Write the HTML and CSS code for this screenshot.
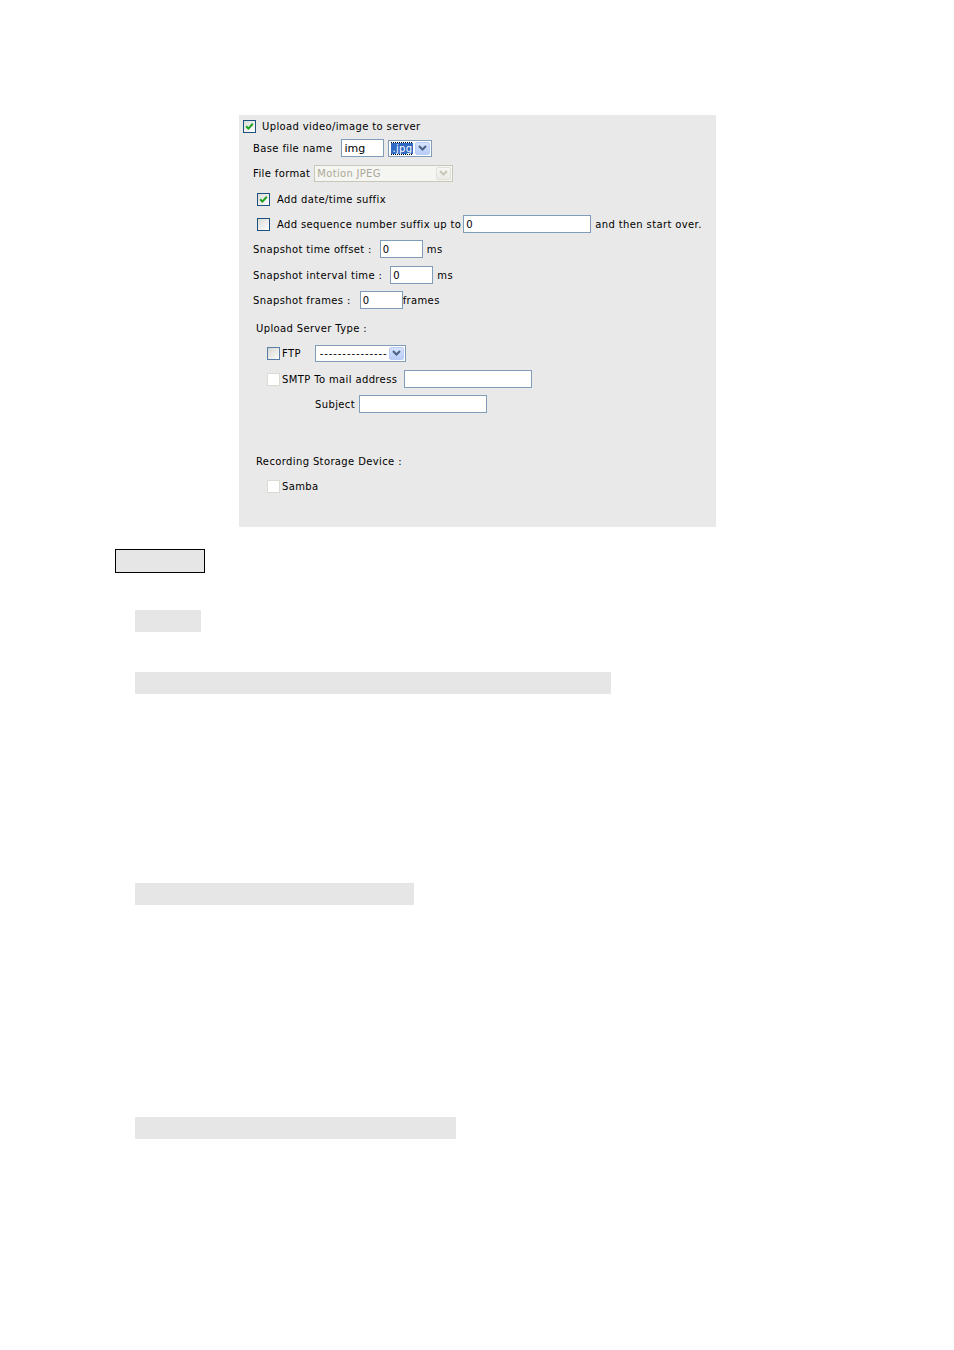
FILE: index.html
```html
<!DOCTYPE html>
<html>
<head>
<meta charset="utf-8">
<link rel="stylesheet" href="styles.css">
</head>
<body>
<div class="page">
  <div class="panel">
    <div class="row r1 ind-a">
      <span class="cb on"><svg viewBox="0 0 11 11" width="11" height="11"><path d="M2.2 5.2 L4.4 7.6 L8.8 2.8" fill="none" stroke="#21a121" stroke-width="2"/></svg></span>
      <span class="lbl gap6">Upload video/image to server</span>
    </div>
    <div class="row r2 ind-b">
      <span class="lbl">Base file name</span>
      <span class="inp w42 ml9">img</span>
      <span class="sel w44 ml4"><span class="sel-val"><span class="hl">.jpg</span></span><span class="btn"><svg viewBox="0 0 9 6" width="9" height="6"><path d="M1 1 L4.5 4.5 L8 1" fill="none" stroke="#4d6185" stroke-width="2"/></svg></span></span>
    </div>
    <div class="row r3 ind-b">
      <span class="lbl">File format</span>
      <span class="sel dis w139 ml4"><span class="sel-val">Motion JPEG</span><span class="btn"><svg viewBox="0 0 9 6" width="9" height="6"><path d="M1 1 L4.5 4.5 L8 1" fill="none" stroke="#c9c7ba" stroke-width="2"/></svg></span></span>
    </div>
    <div class="row r4 ind-c">
      <span class="cb on"><svg viewBox="0 0 11 11" width="11" height="11"><path d="M2.2 5.2 L4.4 7.6 L8.8 2.8" fill="none" stroke="#21a121" stroke-width="2"/></svg></span>
      <span class="lbl gap7">Add date/time suffix</span>
    </div>
    <div class="row r5 ind-c">
      <span class="cb"></span>
      <span class="lbl gap7">Add sequence number suffix up to</span>
      <span class="inp w128 ml2">0</span>
      <span class="lbl ml4">and then start over.</span>
    </div>
    <div class="row r6 ind-b">
      <span class="lbl">Snapshot time offset :</span>
      <span class="inp w43 ml8">0</span>
      <span class="lbl ml4">ms</span>
    </div>
    <div class="row r7 ind-b">
      <span class="lbl">Snapshot interval time :</span>
      <span class="inp w43 ml8">0</span>
      <span class="lbl ml4">ms</span>
    </div>
    <div class="row r8 ind-b">
      <span class="lbl">Snapshot frames :</span>
      <span class="inp w43 ml9">0</span>
      <span class="lbl">frames</span>
    </div>
    <div class="row r9 ind-d">
      <span class="lbl">Upload Server Type :</span>
    </div>
    <div class="row r10 ind-e">
      <span class="cb plain"></span>
      <span class="lbl gap2">FTP</span>
      <span class="sel w91 ml14"><span class="sel-val dash">---------------</span><span class="btn"><svg viewBox="0 0 9 6" width="9" height="6"><path d="M1 1 L4.5 4.5 L8 1" fill="none" stroke="#4d6185" stroke-width="2"/></svg></span></span>
    </div>
    <div class="row r11 ind-e">
      <span class="cb off"></span>
      <span class="lbl gap2">SMTP To mail address</span>
      <span class="inp w128 ml7"></span>
    </div>
    <div class="row r12 ind-f">
      <span class="lbl">Subject</span>
      <span class="inp w128 ml4"></span>
    </div>
    <div class="row r13 ind-d">
      <span class="lbl">Recording Storage Device :</span>
    </div>
    <div class="row r14 ind-e">
      <span class="cb off"></span>
      <span class="lbl gap2">Samba</span>
    </div>
  </div>

  <div class="box"></div>
  <div class="bar b1"></div>
  <div class="bar b2"></div>
  <div class="bar b3"></div>
  <div class="bar b4"></div>
</div>
</body>
</html>
```

FILE: styles.css
```css
html, body {
  margin: 0;
  padding: 0;
  background: #ffffff;
}
.page {
  padding-top: 115px;
  padding-bottom: 40px;
  font-family: "DejaVu Sans", Verdana, sans-serif;
  font-size: 10px;
  color: #000;
}
.panel {
  margin-left: 239px;
  width: 477px;
  height: 412px;
  box-sizing: border-box;
  background: #e9e9e9;
  padding-top: 1px;
  display: flex;
  flex-direction: column;
}
.row {
  height: 20px;
  display: flex;
  align-items: center;
  white-space: nowrap;
}
.r1 { margin-top: 0; }
.r2 { margin-top: 2px; }
.r3 { margin-top: 5px; }
.r4 { margin-top: 6px; }
.r5 { margin-top: 5px; }
.r6 { margin-top: 5px; }
.r7 { margin-top: 6px; }
.r8 { margin-top: 5px; }
.r9 { margin-top: 8px; }
.r10 { margin-top: 5px; }
.r11 { margin-top: 6px; }
.r12 { margin-top: 5px; }
.r13 { margin-top: 37px; }
.r14 { margin-top: 5px; }

.ind-a { padding-left: 4px; }
.ind-b { padding-left: 14px; }
.ind-c { padding-left: 18px; }
.ind-d { padding-left: 17px; }
.ind-e { padding-left: 28px; }
.ind-f { padding-left: 76px; }

.lbl {
  line-height: 14px;
  padding-top: 2px;
  letter-spacing: 0.37px;
}
.gap6 { margin-left: 6px; }
.gap7 { margin-left: 7px; }
.gap2 { margin-left: 2px; }
.ml2 { margin-left: 2px; }
.ml3 { margin-left: 3px; }
.ml4 { margin-left: 4px; }
.ml5 { margin-left: 5px; }
.ml7 { margin-left: 7px; }
.ml8 { margin-left: 8px; }
.ml9 { margin-left: 9px; }
.ml14 { margin-left: 14px; }

.cb {
  width: 13px;
  height: 13px;
  box-sizing: border-box;
  border: 1px solid #1c5180;
  background: linear-gradient(135deg, #dcdcd7 0%, #f4f4f2 70%, #ffffff 100%);
  display: flex;
  align-items: center;
  justify-content: center;
  flex: none;
}
.cb.plain {
  border-color: #587ea8;
  background: linear-gradient(135deg, #d7d7d2 0%, #f0f0ee 70%, #ffffff 100%);
}
.cb.off {
  border: 1px solid #dcdad2;
  background: #ffffff;
}

.inp {
  height: 18px;
  box-sizing: border-box;
  border: 1px solid #7f9db9;
  background: #ffffff;
  padding: 1px 2px 0;
  line-height: 15px;
  font-size: 10px;
  flex: none;
}
.w42 { width: 43px; font-size: 11px; }
.w43 { width: 43px; }
.w128 { width: 128px; }

.sel {
  height: 17px;
  box-sizing: border-box;
  border: 1px solid #7f9db9;
  background: #ffffff;
  display: flex;
  align-items: center;
  justify-content: space-between;
  padding: 0 1px 0 2px;
  flex: none;
}
.w44 { width: 44px; }
.w91 { width: 91px; }
.w139 { width: 139px; }
.sel-val {
  line-height: 13px;
  font-size: 10px;
  overflow: hidden;
  letter-spacing: 0.3px;
}
.sel-val.dash {
  letter-spacing: 0.9px;
  padding-left: 2px;
}
.hl {
  display: inline-block;
  background: #316ac5;
  color: #fff;
  outline: 1px dotted #000;
  padding: 0 1px;
  line-height: 11px;
  font-size: 10px;
}
.btn {
  width: 15px;
  height: 13px;
  box-sizing: border-box;
  border: 1px solid #bccdf3;
  border-radius: 2px;
  background: linear-gradient(#d6e3fd, #b8cdf8);
  display: flex;
  align-items: center;
  justify-content: center;
  flex: none;
}
.sel.dis {
  border-color: #c9c7ba;
  background: #f5f5f2;
  color: #aca899;
}
.sel.dis .btn {
  border-color: #e2e1da;
  background: linear-gradient(#f6f6f3, #ebeae5);
}

.box {
  margin-top: 22px;
  margin-left: 115px;
  width: 90px;
  height: 24px;
  box-sizing: border-box;
  border: 1px solid #000;
  background: #e6e6e6;
}
.bar {
  margin-left: 135px;
  height: 22px;
  background: #e6e6e6;
}
.b1 { margin-top: 37px; width: 66px; }
.b2 { margin-top: 40px; width: 476px; }
.b3 { margin-top: 189px; width: 279px; }
.b4 { margin-top: 212px; width: 321px; }
```
